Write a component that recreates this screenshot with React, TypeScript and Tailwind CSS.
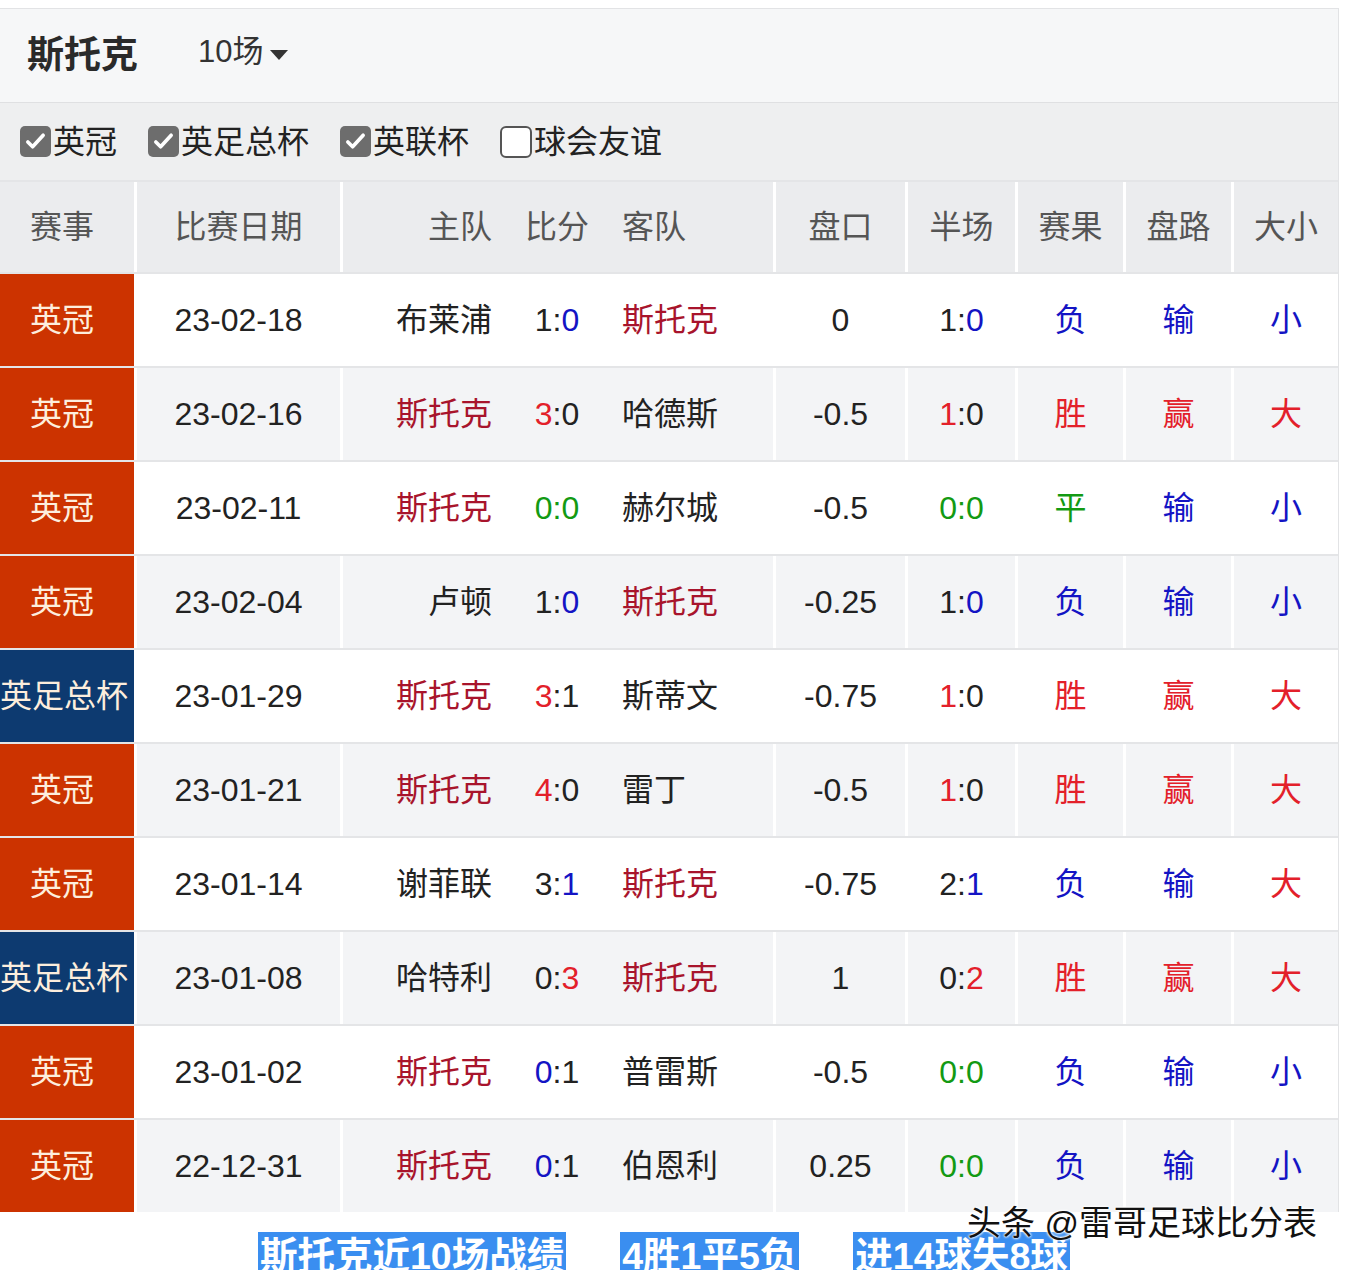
import React from 'react';

type Match = {
  league: '英冠' | '英足总杯';
  date: string;
  home: string;
  away: string;
  score: string;
  handicap: string;
  half: string;
  result: '胜' | '平' | '负';
  pan: '赢' | '输';
  size: '大' | '小';
};

const STOKE = '斯托克';

const matches: Match[] = [
  { league: '英冠', date: '23-02-18', home: '布莱浦', away: STOKE, score: '1:0', handicap: '0', half: '1:0', result: '负', pan: '输', size: '小' },
  { league: '英冠', date: '23-02-16', home: STOKE, away: '哈德斯', score: '3:0', handicap: '-0.5', half: '1:0', result: '胜', pan: '赢', size: '大' },
  { league: '英冠', date: '23-02-11', home: STOKE, away: '赫尔城', score: '0:0', handicap: '-0.5', half: '0:0', result: '平', pan: '输', size: '小' },
  { league: '英冠', date: '23-02-04', home: '卢顿', away: STOKE, score: '1:0', handicap: '-0.25', half: '1:0', result: '负', pan: '输', size: '小' },
  { league: '英足总杯', date: '23-01-29', home: STOKE, away: '斯蒂文', score: '3:1', handicap: '-0.75', half: '1:0', result: '胜', pan: '赢', size: '大' },
  { league: '英冠', date: '23-01-21', home: STOKE, away: '雷丁', score: '4:0', handicap: '-0.5', half: '1:0', result: '胜', pan: '赢', size: '大' },
  { league: '英冠', date: '23-01-14', home: '谢菲联', away: STOKE, score: '3:1', handicap: '-0.75', half: '2:1', result: '负', pan: '输', size: '大' },
  { league: '英足总杯', date: '23-01-08', home: '哈特利', away: STOKE, score: '0:3', handicap: '1', half: '0:2', result: '胜', pan: '赢', size: '大' },
  { league: '英冠', date: '23-01-02', home: STOKE, away: '普雷斯', score: '0:1', handicap: '-0.5', half: '0:0', result: '负', pan: '输', size: '小' },
  { league: '英冠', date: '22-12-31', home: STOKE, away: '伯恩利', score: '0:1', handicap: '0.25', half: '0:0', result: '负', pan: '输', size: '小' },
];

const RED = 'text-[#e3202a]';
const BLUE = 'text-[#1414c4]';
const GREEN = 'text-[#139a13]';

const cols = 'grid grid-cols-[134px_203px_430px_129px_107px_105px_105px_104px] gap-x-[3px]';

// colour the goals of Stoke: red when ahead, blue when behind, green when level
function Score({ value, stokeHome }: { value: string; stokeHome: boolean }) {
  const [h, a] = value.split(':');
  const mine = stokeHome ? +h : +a;
  const theirs = stokeHome ? +a : +h;
  if (mine === theirs) return <span className={GREEN}>{value}</span>;
  const c = mine > theirs ? RED : BLUE;
  return stokeHome ? (
    <span>
      <span className={c}>{h}</span>:{a}
    </span>
  ) : (
    <span>
      {h}:<span className={c}>{a}</span>
    </span>
  );
}

function Check({ checked, label }: { checked: boolean; label: string }) {
  return (
    <div className="flex items-center">
      {checked ? (
        <span className="w-[31px] h-[31px] rounded-[5px] bg-[#6d6d6d] flex items-center justify-center">
          <svg width="23" height="23" viewBox="0 0 24 24" fill="none">
            <path d="M4 12.5l5 5L20 5.5" stroke="#fff" strokeWidth="3.8" strokeLinecap="round" strokeLinejoin="round" />
          </svg>
        </span>
      ) : (
        <span className="w-[32px] h-[32px] rounded-[6px] bg-white border-2 border-[#555]" />
      )}
      <span className="ml-[2px] text-[32px] text-[#222]">{label}</span>
    </div>
  );
}

const resultColor = (r: string) => (r === '胜' ? RED : r === '平' ? GREEN : BLUE);

export default function App() {
  return (
    <div className="w-[1350px] bg-white font-['Liberation_Sans','Noto_Sans_CJK_SC',sans-serif] relative">
      <div className="pt-[8px]">
        <div className="w-[1339px] border-t border-r border-[#e2e3e5]">
          {/* title bar */}
          <div className="h-[93px] bg-[#f6f7f8] flex items-center pl-[27px]">
            <span className="text-[37px] font-bold text-[#2a2a2a]">斯托克</span>
            <span className="ml-[60px] text-[31px] text-[#333] flex items-center -mt-[6px]">
              10场
              <svg width="20" height="12" viewBox="0 0 20 12" className="ml-[6px] mt-[4px]">
                <path d="M1 1h18L10 11z" fill="#333" />
              </svg>
            </span>
          </div>

          {/* league filters */}
          <div className="h-[78px] bg-[#eeeff0] border-t border-[#dfe0e2] flex items-center pl-[20px] gap-[31px]">
            <Check checked label="英冠" />
            <Check checked label="英足总杯" />
            <Check checked label="英联杯" />
            <Check checked={false} label="球会友谊" />
          </div>

          {/* table head */}
          <div className={`${cols} bg-white border-t-2 border-[#e4e5e7] h-[92px] text-[32px] text-[#555]`}>
            <div className="bg-[#ebecee] flex items-center justify-center pr-[10px]">赛事</div>
            <div className="bg-[#ebecee] flex items-center justify-center">比赛日期</div>
            <div className="bg-[#ebecee] grid grid-cols-[149px_130px_1fr] items-center">
              <span className="text-right">主队</span>
              <span className="text-center">比分</span>
              <span>客队</span>
            </div>
            <div className="bg-[#ebecee] flex items-center justify-center">盘口</div>
            <div className="bg-[#ebecee] flex items-center justify-center">半场</div>
            <div className="bg-[#ebecee] flex items-center justify-center">赛果</div>
            <div className="bg-[#ebecee] flex items-center justify-center">盘路</div>
            <div className="bg-[#ebecee] flex items-center justify-center">大小</div>
          </div>

          {/* rows */}
          {matches.map((m, i) => {
            const bg = i % 2 === 0 ? 'bg-white' : 'bg-[#f3f4f6]';
            const stokeHome = m.home === STOKE;
            const lg = m.league === '英冠' ? 'bg-[#cc3300] pr-[10px]' : 'bg-[#0d3a70] pr-[6px]';
            return (
              <div key={i} className={`${cols} bg-white border-t-2 border-[#e4e5e7] h-[94px] text-[32px] text-[#222]`}>
                <div className={`${lg} flex items-center justify-center text-[#fdeedd] whitespace-nowrap`}>{m.league}</div>
                <div className={`${bg} flex items-center justify-center`}>{m.date}</div>
                <div className={`${bg} grid grid-cols-[149px_130px_1fr] items-center`}>
                  <span className={`text-right ${m.home === STOKE ? 'text-[#a8142c]' : ''}`}>{m.home}</span>
                  <span className="text-center">
                    <Score value={m.score} stokeHome={stokeHome} />
                  </span>
                  <span className={m.away === STOKE ? 'text-[#a8142c]' : ''}>{m.away}</span>
                </div>
                <div className={`${bg} flex items-center justify-center`}>{m.handicap}</div>
                <div className={`${bg} flex items-center justify-center`}>
                  <Score value={m.half} stokeHome={stokeHome} />
                </div>
                <div className={`${bg} flex items-center justify-center ${resultColor(m.result)}`}>{m.result}</div>
                <div className={`${bg} flex items-center justify-center ${m.pan === '赢' ? RED : BLUE}`}>{m.pan}</div>
                <div className={`${bg} flex items-center justify-center ${m.size === '大' ? RED : BLUE}`}>{m.size}</div>
              </div>
            );
          })}
        </div>
      </div>

      {/* summary line */}
      <div className="h-[80px] flex items-start pt-[20px] pl-[258px] gap-[54px] text-[37.5px] font-bold text-white leading-[48px] whitespace-nowrap">
        <span className="bg-[#3a8ef0] px-[2px]">斯托克近10场战绩</span>
        <span className="bg-[#3a8ef0] px-[2px]">4胜1平5负</span>
        <span className="bg-[#3a8ef0] px-[2px]">进14球失8球</span>
      </div>

      {/* watermark */}
      <div className="absolute left-[967px] top-[1198px] text-[34px] text-[#111] whitespace-nowrap [text-shadow:0_0_3px_#fff,0_0_3px_#fff,0_0_2px_#fff]">
        头条 @雷哥足球比分表
      </div>
    </div>
  );
}
